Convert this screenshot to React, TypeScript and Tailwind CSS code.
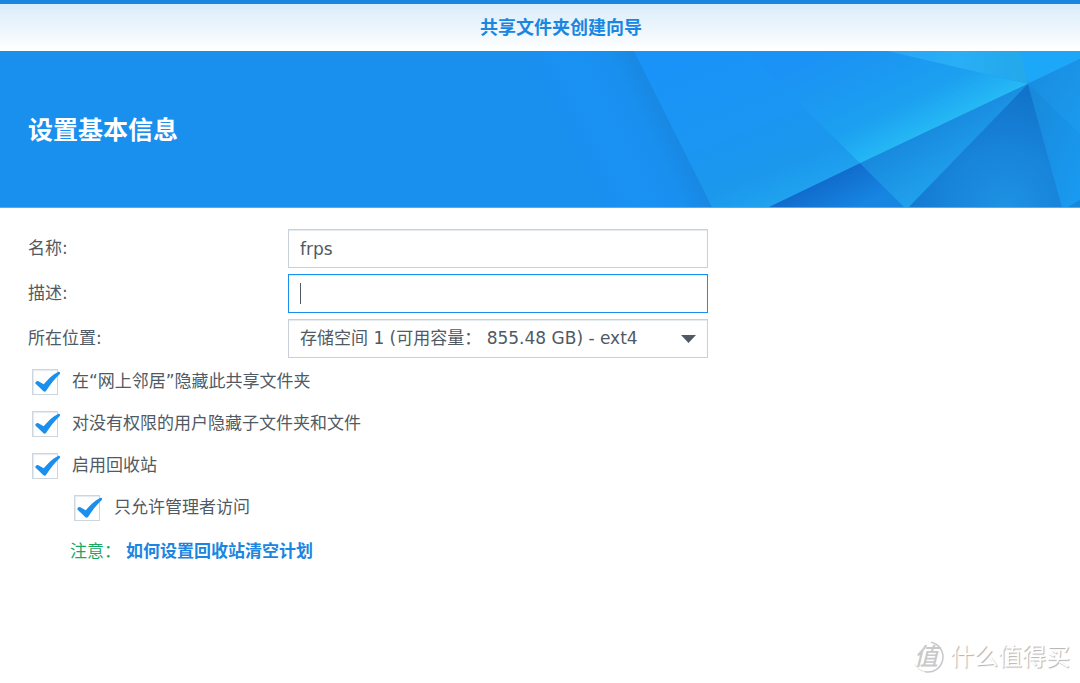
import { useState, type ReactNode } from 'react';

function BannerArt() {
  return (
    <svg
      className="absolute inset-y-0 right-0 h-full w-[540px]"
      viewBox="0 0 540 157"
      preserveAspectRatio="none"
      aria-hidden="true"
    >
      <defs>
        <linearGradient id="left" gradientUnits="userSpaceOnUse" x1="-31" y1="62" x2="94" y2="0">
          <stop offset="0" stopColor="#198fee" />
          <stop offset="0.25" stopColor="#198fee" />
          <stop offset="0.55" stopColor="#1992f4" />
          <stop offset="0.8" stopColor="#1990f0" />
          <stop offset="1" stopColor="#1888e3" />
        </linearGradient>
        <linearGradient id="mid" gradientUnits="userSpaceOnUse" x1="180" y1="0" x2="240" y2="150">
          <stop offset="0" stopColor="#1a93f8" />
          <stop offset="0.5" stopColor="#1a96f3" />
          <stop offset="0.8" stopColor="#1b97ec" />
          <stop offset="1" stopColor="#20a2ef" />
        </linearGradient>
        <linearGradient id="bright" gradientUnits="userSpaceOnUse" x1="330" y1="-20" x2="385" y2="90">
          <stop offset="0" stopColor="#1b93f6" />
          <stop offset="0.3" stopColor="#1b98f2" />
          <stop offset="0.65" stopColor="#1ca0f0" />
          <stop offset="0.95" stopColor="#25b9f5" />
        </linearGradient>
        <linearGradient id="top" x1="0" y1="0" x2="1" y2="0">
          <stop offset="0" stopColor="#26a6f6" />
          <stop offset="0.5" stopColor="#2aaff6" />
          <stop offset="0.85" stopColor="#24a9ee" />
          <stop offset="1" stopColor="#24aaea" />
        </linearGradient>
        <linearGradient id="wedge" gradientUnits="userSpaceOnUse" x1="370" y1="90" x2="405" y2="150">
          <stop offset="0" stopColor="#198bdf" />
          <stop offset="0.7" stopColor="#1f9eeb" />
          <stop offset="1" stopColor="#20a2ed" />
        </linearGradient>
        <linearGradient id="deep" gradientUnits="userSpaceOnUse" x1="275" y1="130" x2="295" y2="170">
          <stop offset="0" stopColor="#1069ca" />
          <stop offset="1" stopColor="#1786e3" />
        </linearGradient>
        <radialGradient id="cone" gradientUnits="userSpaceOnUse" cx="465" cy="157" r="115">
          <stop offset="0" stopColor="#1e92e3" />
          <stop offset="0.5" stopColor="#1884da" />
          <stop offset="1" stopColor="#1174ca" />
        </radialGradient>
        <linearGradient id="right" x1="0" y1="0" x2="1" y2="1">
          <stop offset="0" stopColor="#198bde" />
          <stop offset="1" stopColor="#1b9bee" />
        </linearGradient>
        <linearGradient id="lower" x1="0" y1="0" x2="1" y2="1">
          <stop offset="0" stopColor="#1888d8" />
          <stop offset="1" stopColor="#199bf2" />
        </linearGradient>
      </defs>
      <path d="M0 0H94L172 157H0Z" fill="url(#left)" />
      <path d="M94 0H208L320 113L230 157H172Z" fill="url(#mid)" />
      <path d="M206 0H348L488 33L320 113Z" fill="url(#bright)" />
      <path d="M347 0H481L488 33Z" fill="url(#top)" />
      <path d="M480 0H540V8L488 33Z" fill="#1ca7f8" />
      <path d="M488 33L320 113L363 157H369Z" fill="url(#wedge)" />
      <path d="M320 113L364 157H229Z" fill="url(#deep)" />
      <path d="M488 33L522 157H369Z" fill="url(#cone)" />
      <path d="M488 33L540 8V84Z" fill="url(#right)" />
      <path d="M488 33L540 83V157H522Z" fill="url(#lower)" />
      <path d="M528 157L540 150V157Z" fill="#1787da" />
    </svg>
  );
}

function CheckRow({ id, children }: { id: string; children: ReactNode }) {
  const [checked, setChecked] = useState(true);
  return (
    <div className="flex h-[42px] items-center gap-[14px]">
      <span className="relative size-[26px] shrink-0">
        <input
          id={id}
          type="checkbox"
          checked={checked}
          onChange={(e) => setChecked(e.target.checked)}
          className="block size-[26px] appearance-none border border-[#cdd6df] bg-white shadow-[inset_1px_1px_1px_#e6eaef]"
        />
        {checked && (
          <svg className="pointer-events-none absolute top-0 left-0 h-[26px] w-[30px]" viewBox="0 0 30 26" aria-hidden="true">
            <path
              d="M3.4 14.4C3 13 5 11.500 6.400 12.200L11.700 15.300C15.500 10.800 20 5.900 26 3C27.600 2.400 28.600 3.700 27.800 4.900C22.800 9.400 18.200 15.700 14.200 21.800C13.300 23 12.100 22.900 11.200 22Z"
              fill="#1a8fee"
            />
          </svg>
        )}
      </span>
      <label htmlFor={id} className="pb-[2px] leading-6">
        {children}
      </label>
    </div>
  );
}

const fieldClass =
  'h-[39px] w-full appearance-none rounded-none border bg-white px-[11px] text-[17px] text-[#505a64] outline-none shadow-[inset_0_1px_1px_#e4e9ee]';

export default function App() {
  const [name, setName] = useState('frps');
  const [description, setDescription] = useState('');

  return (
    <div className="relative min-h-screen overflow-hidden bg-white font-['DejaVu_Sans','Noto_Sans_CJK_SC',sans-serif] text-[17px] text-[#505a64]">
      <header className="flex h-[51px] items-center justify-center border-t-4 border-[#1a86e0] bg-linear-to-b from-[#d9ecfa] to-white pl-[42px]">
        <h1 className="text-[18px] leading-6 font-bold text-[#1a86e0]">共享文件夹创建向导</h1>
      </header>

      <section className="relative flex h-[157px] items-center border-b border-[#54acf2] bg-[#198fee] px-7 pt-1">
        <BannerArt />
        <h2 className="relative text-[25px] leading-8 font-bold text-white">设置基本信息</h2>
      </section>

      <form className="px-7 pt-[21px]" onSubmit={(e) => e.preventDefault()}>
        <div className="grid max-w-[680px] grid-cols-[260px_minmax(0,1fr)] items-center gap-y-[6px]">
          <label htmlFor="name">名称:</label>
          <input
            id="name"
            type="text"
            value={name}
            onChange={(e) => setName(e.target.value)}
            className={`${fieldClass} border-[#c8d1da]`}
          />

          <label htmlFor="description">描述:</label>
          <div className="relative">
            <input
              id="description"
              type="text"
              value={description}
              onChange={(e) => setDescription(e.target.value)}
              className={`${fieldClass} block border-[#1a8fee]`}
            />
            {description === '' && (
              <span className="pointer-events-none absolute top-[9px] left-3 h-[21px] w-px bg-[#505a64]" />
            )}
          </div>

          <label htmlFor="location">所在位置:</label>
          <div className="relative">
            <select id="location" className={`${fieldClass} block border-[#c8d1da]`}>
              <option>存储空间 1 (可用容量： 855.48 GB) - ext4</option>
            </select>
            <svg className="pointer-events-none absolute top-4 right-3 h-2 w-[15px]" viewBox="0 0 15 8" aria-hidden="true">
              <path d="M0 0H15L7.500 8Z" fill="#505a64" />
            </svg>
          </div>
        </div>

        <div className="pt-[3px] pl-1">
          <CheckRow id="hide-network">在“网上邻居”隐藏此共享文件夹</CheckRow>
          <CheckRow id="hide-unauthorized">对没有权限的用户隐藏子文件夹和文件</CheckRow>
          <CheckRow id="recycle">启用回收站</CheckRow>
          <div className="pl-[42px]">
            <CheckRow id="admins-only">只允许管理者访问</CheckRow>
          </div>
          <p className="flex items-center gap-[5px] pt-[10px] pl-[38px] leading-6">
            <span className="text-[#1aa866]">注意：</span>
            <a href="#recycle-schedule" className="font-bold text-[#1a86e0]">
              如何设置回收站清空计划
            </a>
          </p>
        </div>
      </form>

      <div className="pointer-events-none absolute right-[10px] bottom-2 flex items-center gap-1 leading-9 text-white">
        <span className="relative flex h-9 w-9 items-center justify-center pr-1">
          <svg className="absolute inset-0 size-9" viewBox="0 0 36 36" aria-hidden="true">
            <path d="M21 3.300A15 15 0 0 1 15 32.700" fill="none" stroke="#c8c8c8" strokeWidth="1.500" />
            <path d="M15 32.700A15 15 0 0 1 5 25.500" fill="none" stroke="#dedede" strokeWidth="1" />
          </svg>
          <span className="relative text-[24px] font-medium text-[#c9c9c9] italic">值</span>
        </span>
        <span className="text-[24px] [text-shadow:1px_1px_1px_#b0b0b0]">什么值得买</span>
      </div>
    </div>
  );
}
